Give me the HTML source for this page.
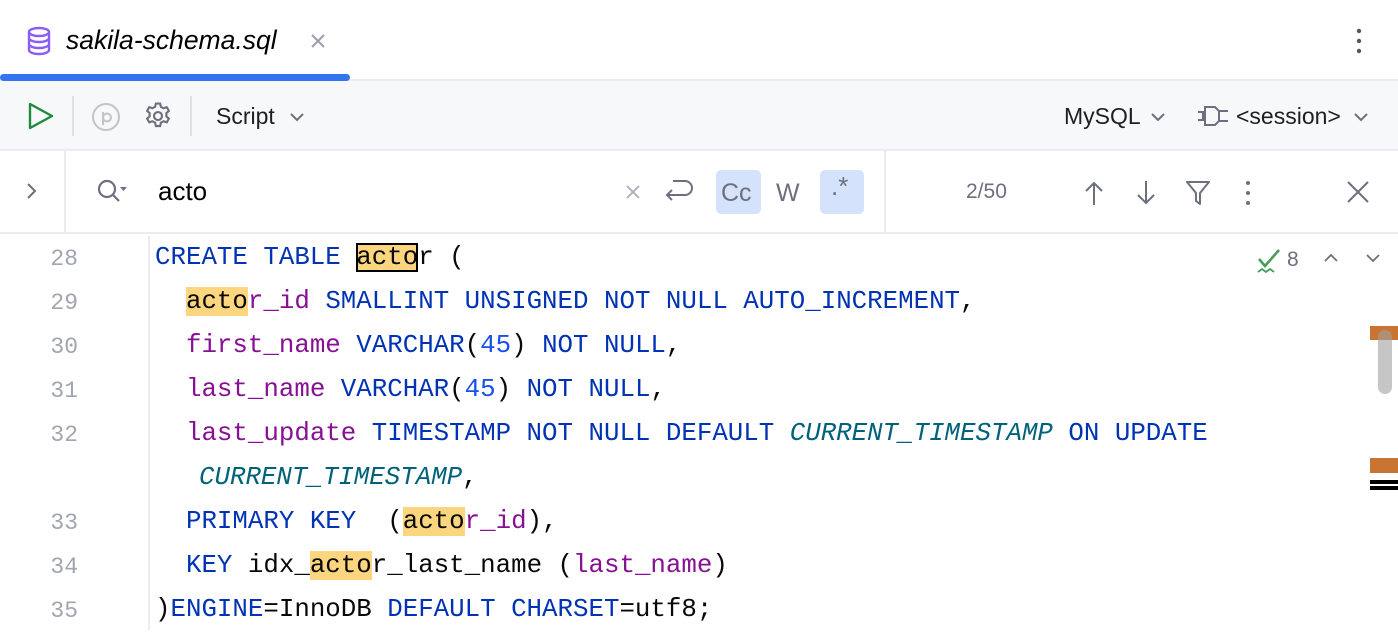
<!DOCTYPE html>
<html><head><meta charset="utf-8"><style>
*{margin:0;padding:0;box-sizing:border-box}
body{width:1398px;height:630px;overflow:hidden;background:#fff;font-family:"Liberation Sans",sans-serif;position:relative}
.abs{position:absolute}
.tabbar{left:0;top:0;width:1398px;height:81px;background:#fff;border-bottom:2px solid #ebecf0}
.toolbar{left:0;top:81px;width:1398px;height:70px;background:#f7f8fa;border-bottom:2px solid #ebecf0}
.find{left:0;top:151px;width:1398px;height:83px;background:#fff;border-bottom:2px solid #ebecf0}
.ui{font-size:22px;color:#1f1f1f}
.code{font-family:"Liberation Mono","DejaVu Sans Mono",monospace;font-size:25.8px;line-height:44px;white-space:pre;color:#080808}
.ln{font-family:"Liberation Mono",monospace;font-size:23px;color:#a0a5b0;text-align:right;width:78px;line-height:44px}
.k{color:#0033b3}.c{color:#871094}.n{color:#1750eb}.i{color:#00627a;font-style:italic}
.h{background:#fcd57f}
.hb{background:#fcd57f;outline:2px solid #000;outline-offset:-2px}
</style></head><body>
<div class="abs tabbar"></div>
<svg class="abs" style="left:26px;top:26px" width="28" height="30" viewBox="0 0 28 30" fill="none" stroke="#8b5cf6" stroke-width="2.4"><ellipse cx="13" cy="6" rx="10" ry="4"/><path d="M3 6v18c0 2.2 4.5 4 10 4s10-1.8 10-4V6M3 12c0 2.2 4.5 4 10 4s10-1.8 10-4M3 18c0 2.2 4.5 4 10 4s10-1.8 10-4"/></svg>
<div class="abs ui" style="left:66px;top:25px;font-style:italic;font-size:26.5px;color:#000">sakila-schema.sql</div>
<svg class="abs" style="left:310px;top:33px" width="16" height="16" stroke="#9aa0aa" stroke-width="2"><path d="M2 2l12 12M14 2L2 14"/></svg>
<div class="abs" style="left:0;top:74px;width:350px;height:7px;background:#3574f0;border-radius:4px"></div>
<svg class="abs" style="left:1355px;top:28px" width="8" height="26" fill="#555"><circle cx="4" cy="3" r="2.2"/><circle cx="4" cy="13" r="2.2"/><circle cx="4" cy="23" r="2.2"/></svg>

<div class="abs toolbar"></div>
<svg class="abs" style="left:27px;top:102px" width="28" height="28" fill="none" stroke="#208a3c" stroke-width="2.4" stroke-linejoin="round"><path d="M3 2l22 12L3 26z"/></svg>
<div class="abs" style="left:72px;top:96px;width:2px;height:40px;background:#dfe1e5"></div>
<svg class="abs" style="left:91px;top:102px" width="30" height="30" fill="none" stroke="#c4c4c4" stroke-width="2"><circle cx="15" cy="15" r="13"/><path d="M12 23V10M12 15.5a4 4 0 108 0a4 4 0 10-8 0"/></svg>
<svg class="abs" style="left:143px;top:101px" width="30" height="30" viewBox="0 0 24 24" fill="none" stroke="#6c707e" stroke-width="1.7"><circle cx="12" cy="12" r="3.2"/><path d="M10.3 2h3.4l.6 2.6 2.2 1.2 2.5-.9 1.7 3-2 1.8v2.6l2 1.8-1.7 3-2.5-.9-2.2 1.2-.6 2.6h-3.4l-.6-2.6-2.2-1.2-2.5.9-1.7-3 2-1.8v-2.6l-2-1.8 1.7-3 2.5.9 2.2-1.2z"/></svg>
<div class="abs" style="left:190px;top:96px;width:2px;height:40px;background:#dfe1e5"></div>
<div class="abs ui" style="left:216px;top:103px;font-size:23px">Script</div>
<svg class="abs" style="left:289px;top:112px" width="16" height="10" fill="none" stroke="#6c707e" stroke-width="2"><path d="M2 2l6 6 6-6"/></svg>
<div class="abs ui" style="left:1064px;top:103px;font-size:23px">MySQL</div>
<svg class="abs" style="left:1150px;top:112px" width="16" height="10" fill="none" stroke="#6c707e" stroke-width="2"><path d="M2 2l6 6 6-6"/></svg>
<svg class="abs" style="left:1197px;top:104px" width="34" height="24" fill="none" stroke="#6c707e" stroke-width="2"><path d="M1 8h5v8H1M8 3h10l4 4v10l-4 4H8zM22 7h9M22 17h9"/></svg>
<div class="abs ui" style="left:1236px;top:103px;font-size:23px">&lt;session&gt;</div>
<svg class="abs" style="left:1353px;top:112px" width="16" height="10" fill="none" stroke="#6c707e" stroke-width="2"><path d="M2 2l6 6 6-6"/></svg>

<div class="abs find"></div>
<div class="abs" style="left:64px;top:151px;width:2px;height:83px;background:#ebecf0"></div>
<div class="abs" style="left:884px;top:151px;width:2px;height:83px;background:#ebecf0"></div>
<svg class="abs" style="left:25px;top:182px" width="12" height="18" fill="none" stroke="#6c707e" stroke-width="2"><path d="M3 2l7 7-7 7"/></svg>
<svg class="abs" style="left:96px;top:178px" width="36" height="30" fill="none" stroke="#6c707e" stroke-width="2.2"><circle cx="11" cy="11" r="8"/><path d="M17 17l6 6"/><path d="M24 9h7l-3.5 4z" fill="#6c707e" stroke="none"/></svg>
<div class="abs" style="left:158px;top:176px;font-size:26px;color:#000">acto</div>
<svg class="abs" style="left:626px;top:185px" width="14" height="14" stroke="#a8adb8" stroke-width="1.8"><path d="M1 1l12 12M13 1L1 13"/></svg>
<svg class="abs" style="left:663px;top:178px" width="32" height="30" fill="none" stroke="#6c707e" stroke-width="2"><path d="M10 3h12a7 7 0 010 14H4M9 12l-5 5 5 5"/></svg>
<div class="abs" style="left:716px;top:170px;width:45px;height:44px;background:#d5e2fc;border-radius:5px"></div>
<div class="abs" style="left:721px;top:179px;font-size:25px;color:#6c707e">Cc</div>
<div class="abs" style="left:776px;top:179px;font-size:25px;color:#6c707e">W</div>
<div class="abs" style="left:820px;top:170px;width:44px;height:44px;background:#d5e2fc;border-radius:5px"></div>
<div class="abs" style="left:831px;top:171px;font-size:26px;color:#6c707e">.*</div>
<div class="abs" style="left:966px;top:180px;font-size:21px;color:#6c707e">2/50</div>
<svg class="abs" style="left:1083px;top:180px" width="22" height="26" fill="none" stroke="#6c707e" stroke-width="2"><path d="M11 25V3M3 11l8-8 8 8"/></svg>
<svg class="abs" style="left:1135px;top:180px" width="22" height="26" fill="none" stroke="#6c707e" stroke-width="2"><path d="M11 1v22M3 15l8 8 8-8"/></svg>
<svg class="abs" style="left:1185px;top:180px" width="26" height="26" fill="none" stroke="#6c707e" stroke-width="2" stroke-linejoin="round"><path d="M2 2h22l-9 11v11l-4-3v-8z"/></svg>
<svg class="abs" style="left:1244px;top:180px" width="8" height="26" fill="#6c707e"><circle cx="4" cy="3" r="2"/><circle cx="4" cy="13" r="2"/><circle cx="4" cy="23" r="2"/></svg>
<svg class="abs" style="left:1346px;top:180px" width="24" height="24" stroke="#6c707e" stroke-width="2"><path d="M2 2l20 20M22 2L2 22"/></svg>

<div class="abs" style="left:148px;top:236px;width:2px;height:394px;background:#ebecf0"></div>
<div class="abs ln" style="left:0;top:237px">28<br>29<br>30<br>31<br>32<br>&nbsp;<br>33<br>34<br>35</div>
<div class="abs code" style="left:155px;top:236px"><span class="k">CREATE TABLE </span><span class="hb">acto</span>r (
  <span class="h">acto</span><span class="c">r_id</span> <span class="k">SMALLINT UNSIGNED NOT NULL AUTO_INCREMENT</span>,
  <span class="c">first_name</span> <span class="k">VARCHAR</span>(<span class="n">45</span>) <span class="k">NOT NULL</span>,
  <span class="c">last_name</span> <span class="k">VARCHAR</span>(<span class="n">45</span>) <span class="k">NOT NULL</span>,
  <span class="c">last_update</span> <span class="k">TIMESTAMP NOT NULL DEFAULT</span> <span class="i">CURRENT_TIMESTAMP</span> <span class="k">ON UPDATE</span>
<span style="margin-left:44px" class="i">CURRENT_TIMESTAMP</span>,
  <span class="k">PRIMARY KEY</span>  (<span class="h">acto</span><span class="c">r_id</span>),
  <span class="k">KEY</span> idx_<span class="h">acto</span>r_last_name (<span class="c">last_name</span>)
)<span class="k">ENGINE</span>=InnoDB <span class="k">DEFAULT CHARSET</span>=utf8;</div>

<svg class="abs" style="left:1256px;top:248px" width="28" height="28" fill="none" stroke="#4a9c5a" stroke-width="2.6"><path d="M3 11l6 7L23 2"/><path d="M2 24l4-3 4 3 4-3 4 3" stroke-width="1.8"/></svg>
<div class="abs" style="left:1287px;top:248px;font-size:21px;color:#6c707e">8</div>
<svg class="abs" style="left:1323px;top:253px" width="16" height="10" fill="none" stroke="#6c707e" stroke-width="1.8"><path d="M2 8l6-6 6 6"/></svg>
<svg class="abs" style="left:1365px;top:253px" width="16" height="10" fill="none" stroke="#6c707e" stroke-width="1.8"><path d="M2 2l6 6 6-6"/></svg>
<div class="abs" style="left:1370px;top:326px;width:28px;height:14px;background:#c87533"></div>
<div class="abs" style="left:1378px;top:330px;width:14px;height:64px;background:rgba(160,160,160,.6);border-radius:7px"></div>
<div class="abs" style="left:1370px;top:458px;width:28px;height:15px;background:#c87533"></div>
<div class="abs" style="left:1370px;top:480px;width:28px;height:4px;background:#000"></div>
<div class="abs" style="left:1370px;top:486px;width:28px;height:4px;background:#000"></div>
</body></html>
